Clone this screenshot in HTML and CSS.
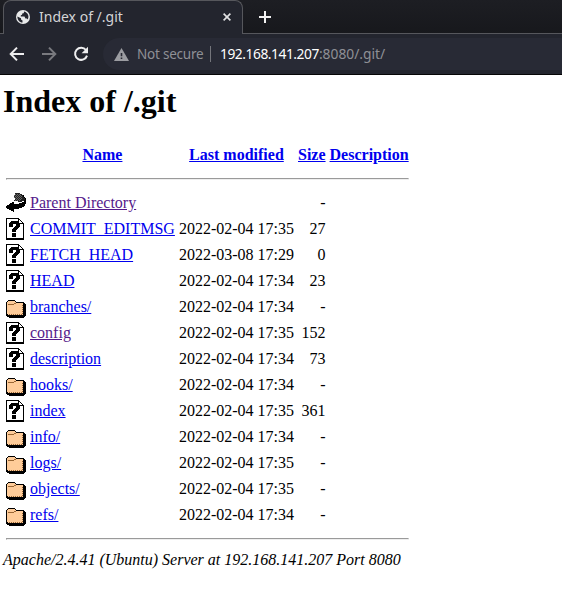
FILE: index.html
```html
<!DOCTYPE html>
<html lang="en">
<head>
<meta charset="utf-8">
<title>Index of /.git</title>
<link rel="stylesheet" href="styles.css">
</head>
<body>
<svg class="defs" width="0" height="0">
  <symbol id="back" viewBox="0 0 20 22" shape-rendering="crispEdges">
    <path fill="#222" d="M9 1h5v1h2v1h2v2h1v4h-3v1h-4V9H8V8h1V6H8V3h1z"/>
    <path stroke="#666" stroke-dasharray="1 1" d="M9 2.5h6M8 3.5h8M9 4.5h7M8 5.5h8M9 6.5h7M10 7.5h6M9 8.5h5"/>
    <path d="M17 3h1v2h1v1h1v6h-1v2h-1v1h-2v1h-3v1H8v3H7v-1H5v-1H3v-1H1v-1H0v-2h1v-1h2v-1h1v-1h2v-1h2v2h5v-1h3v-1h2V8h1V6h-1z"/>
  </symbol>
  <symbol id="unknown" viewBox="0 0 20 22" shape-rendering="crispEdges">
    <path d="M0 0h13v1h1v1h1v1h1v1h1v1h1v17H0z"/>
    <path fill="#fff" d="M1 1h11v5h5v14H1z"/>
    <path fill="#fff" d="M13 2h1v1h1v1h1v1h-3z"/>
    <path d="M5 3h7v1h1v1h1v4h-1v1h-1v1h-1v1h-1v2H6v-3h1v-1h1V9h1V8h1V6H7v3H3V5h1V4h1zM6 15h4v4H6z"/>
  </symbol>
  <symbol id="folder" viewBox="0 0 20 22" shape-rendering="crispEdges">
    <path d="M2 4h7v1h1v1h8v1h1v1h1v12h-1v1h-1v1H3v-1H1v-1H0V6h1V5h1z"/>
    <path fill="#fc9" d="M2 5h7v1h1v1h7v12H2v-1H1V6h1z"/>
    <path fill="#963" d="M2 8h6v1H2zM8 7h2v1H8z"/>
    <path stroke="#963" stroke-dasharray="1 1" d="M3 18.5h14M16.5 9v9"/>
  </symbol>
</svg>

<header class="browser">
  <div class="tabstrip">
    <div class="tab">
      <svg class="globe" viewBox="0 0 14 14"><circle cx="7" cy="7" r="7" fill="#e8e9ea"/><path fill="#23252e" d="M1.4 6.4 5 8.3v1.2l1.5 1v2c-3-.2-5.2-2.7-5.1-6.1zM8 1.5c.2 1.5-.4 2-1.9 2.1v1.2L4.8 5.2v1.3h3.7l.9 2h1.5l.7 1c1.8-2.8.8-6.7-3.6-8z"/></svg>
      <span class="tab-title">Index of /.git</span>
      <svg class="close" viewBox="0 0 8 8"><path d="M.6.6l6.8 6.8M7.4.6.6 7.4"/></svg>
    </div>
    <svg class="plus" viewBox="0 0 12 12"><path d="M6 0v12M0 6h12"/></svg>
  </div>
  <div class="toolbar">
    <svg class="nav" viewBox="0 0 16 16"><path d="M15 8H2M8 1.6 1.7 8 8 14.4"/></svg>
    <svg class="nav dim" viewBox="0 0 16 16"><path d="M1 8h13M8 1.6 14.3 8 8 14.4"/></svg>
    <svg class="nav" viewBox="0 0 16 16"><path d="M13 4A6.1 6.1 0 1 0 14 9.6"/><path class="solid" d="M15 .8v6.4H8.6z"/></svg>
    <div class="omnibox">
      <svg class="warn" viewBox="0 0 15 13"><path fill="#9b9ca1" d="M7.5 0 15 13H0z"/><path fill="#282a35" d="M6.7 5h1.6v3.3H6.7zM6.7 9.5h1.6V11H6.7z"/></svg>
      <span class="secure">Not secure</span>
      <i class="divider"></i>
      <span class="url"><b>192.168.141.207</b>:8080/.git/</span>
    </div>
  </div>
</header>

<main>
<h1>Index of /.git</h1>
<table>
<tr><th class="icon"><span class="blank"></span></th><th><a href="#">Name</a></th><th><a href="#">Last modified</a></th><th><a href="#">Size</a></th><th><a href="#">Description</a></th></tr>
<tr><th colspan="5"><hr></th></tr>
<tr><td class="icon"><svg><use href="#back"/></svg></td><td><a class="seen" href="#">Parent Directory</a></td><td></td><td class="num">-</td><td></td></tr>
<tr><td class="icon"><svg><use href="#unknown"/></svg></td><td><a href="#">COMMIT_EDITMSG</a></td><td class="num">2022-02-04 17:35</td><td class="num">27</td><td></td></tr>
<tr><td class="icon"><svg><use href="#unknown"/></svg></td><td><a href="#">FETCH_HEAD</a></td><td class="num">2022-03-08 17:29</td><td class="num">0</td><td></td></tr>
<tr><td class="icon"><svg><use href="#unknown"/></svg></td><td><a href="#">HEAD</a></td><td class="num">2022-02-04 17:34</td><td class="num">23</td><td></td></tr>
<tr><td class="icon"><svg><use href="#folder"/></svg></td><td><a href="#">branches/</a></td><td class="num">2022-02-04 17:34</td><td class="num">-</td><td></td></tr>
<tr><td class="icon"><svg><use href="#unknown"/></svg></td><td><a class="seen" href="#">config</a></td><td class="num">2022-02-04 17:35</td><td class="num">152</td><td></td></tr>
<tr><td class="icon"><svg><use href="#unknown"/></svg></td><td><a href="#">description</a></td><td class="num">2022-02-04 17:34</td><td class="num">73</td><td></td></tr>
<tr><td class="icon"><svg><use href="#folder"/></svg></td><td><a href="#">hooks/</a></td><td class="num">2022-02-04 17:34</td><td class="num">-</td><td></td></tr>
<tr><td class="icon"><svg><use href="#unknown"/></svg></td><td><a href="#">index</a></td><td class="num">2022-02-04 17:35</td><td class="num">361</td><td></td></tr>
<tr><td class="icon"><svg><use href="#folder"/></svg></td><td><a href="#">info/</a></td><td class="num">2022-02-04 17:34</td><td class="num">-</td><td></td></tr>
<tr><td class="icon"><svg><use href="#folder"/></svg></td><td><a href="#">logs/</a></td><td class="num">2022-02-04 17:35</td><td class="num">-</td><td></td></tr>
<tr><td class="icon"><svg><use href="#folder"/></svg></td><td><a href="#">objects/</a></td><td class="num">2022-02-04 17:35</td><td class="num">-</td><td></td></tr>
<tr><td class="icon"><svg><use href="#folder"/></svg></td><td><a href="#">refs/</a></td><td class="num">2022-02-04 17:34</td><td class="num">-</td><td></td></tr>
<tr><th colspan="5"><hr></th></tr>
</table>
<address>Apache/2.4.41 (Ubuntu) Server at 192.168.141.207 Port 8080</address>
</main>
</body>
</html>
```
FILE: styles.css
```css
body {
  margin: 0;
  background: #fff;
  color: #000;
  font: 16px "Liberation Serif", serif;
  overflow: hidden;
}
.defs { display: none; }

.browser {
  height: 75px;
  box-sizing: border-box;
  background: #23252e;
  border-bottom: 1px solid #050506;
  font-family: "Noto Sans", sans-serif;
}
.tabstrip {
  display: flex;
  height: 34px;
  background: linear-gradient(#1d1e23, #17181c);
  box-shadow: inset 0 -1px #56575c;
}
.tab {
  display: flex;
  align-items: center;
  box-sizing: border-box;
  width: 240px;
  height: 34px;
  margin-left: 3px;
  padding: 0 11px 1px 12px;
  border: 1px solid #56575c;
  border-bottom: 0;
  border-radius: 8px 8px 0 0;
  background: #23252e;
}
.globe { width: 14px; height: 14px; }
.tab-title { flex: 1; margin: 0 0 1px 9px; font-size: 14px; line-height: 20px; color: #d3d4d6; }
.close { width: 8px; height: 8px; stroke: #e2e3e4; stroke-width: 1.6; }
.plus { width: 12px; height: 12px; margin: 11px 0 0 16px; stroke: #f2f2f2; stroke-width: 2; }

.toolbar { display: flex; align-items: center; height: 40px; padding-left: 9px; }
.nav {
  width: 16px;
  height: 16px;
  margin-right: 16px;
  fill: none;
  stroke: #eeeeef;
  stroke-width: 2;
}
.dim { stroke: #797a7f; }
.solid { fill: #eeeeef; stroke: none; }
.omnibox {
  display: flex;
  align-items: center;
  flex: 1;
  height: 32px;
  margin-left: -2px;
  padding-left: 11px;
  border-radius: 16px 0 0 16px;
  background: #282a35;
  font-size: 14px;
  line-height: 20px;
}
.warn { width: 15px; height: 13px; }
.secure { width: 67px; margin-left: 8px; color: #8f9096; font-size: 13.5px; letter-spacing: -0.22px; white-space: nowrap; }
.divider { width: 1px; height: 16px; margin: 0 9px 0 6px; background: #74757b; }
.url { color: #8f9096; font-size: 13.8px; }
.url b { color: #fff; font-weight: 400; letter-spacing: -0.46px; }

main { padding: 8px 3px; }
h1 { margin: 0 0 21px; font-size: 32px; line-height: 37px; }
table { border-spacing: 2px; }
th, td { padding: 1px; line-height: 18px; }
.icon svg, .blank { display: block; width: 20px; height: 22px; }
.num { text-align: right; }
a { color: #00e; text-decoration: underline; }
.seen { color: #551a8b; }
hr { margin: 8px 0; }
address { font-style: italic; line-height: 18px; }
```
